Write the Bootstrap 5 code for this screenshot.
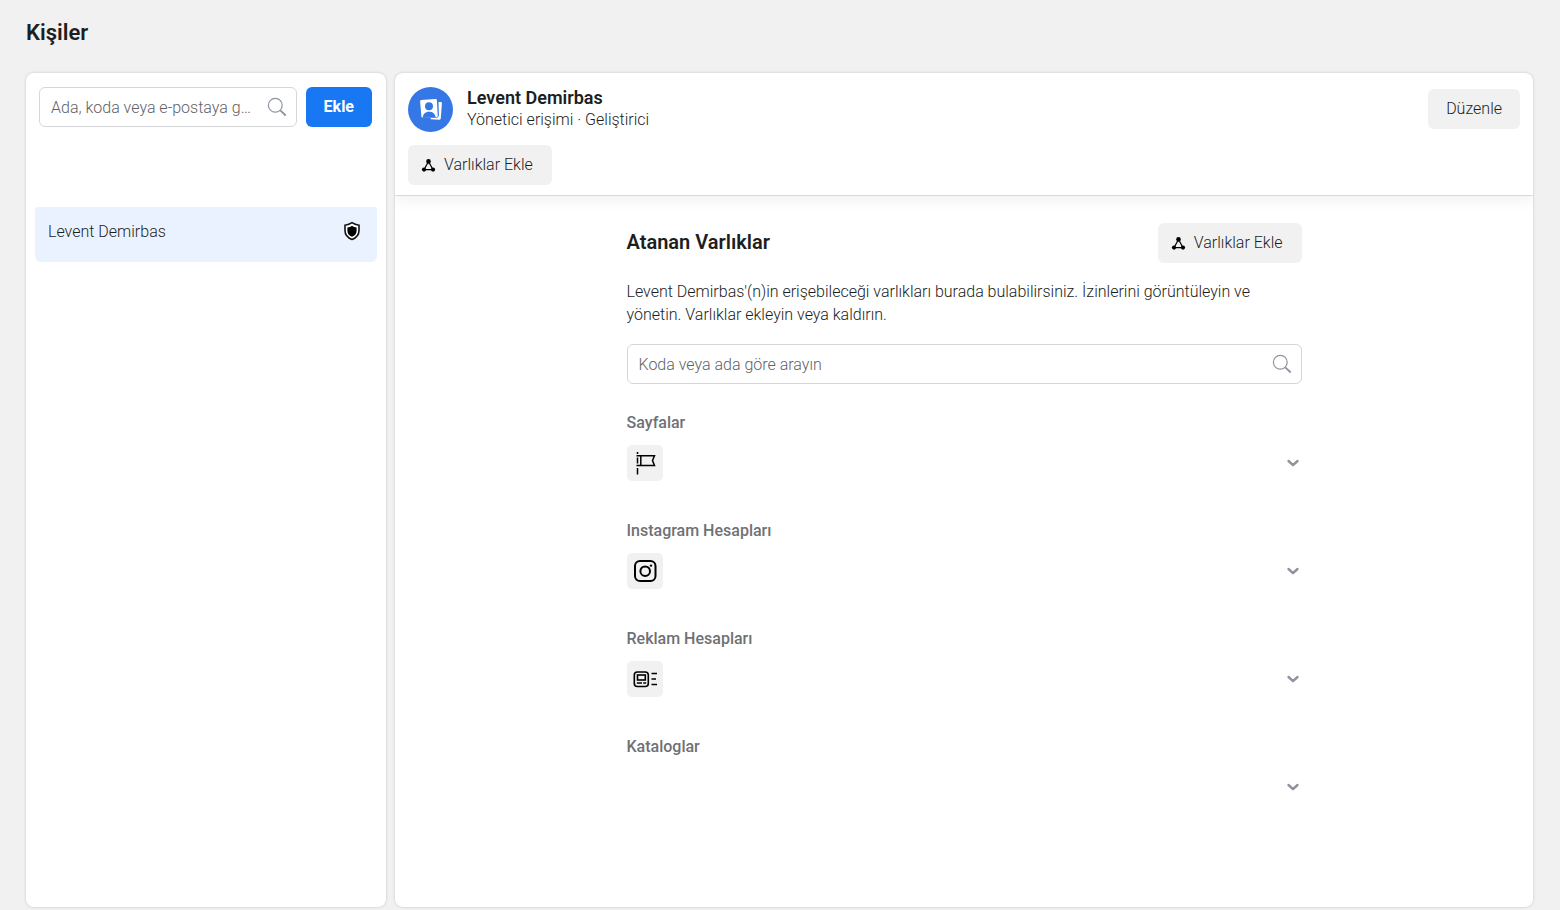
<!DOCTYPE html>
<html lang="tr">
<head>
<meta charset="utf-8">
<meta name="viewport" content="width=device-width, initial-scale=1">
<title>Kişiler</title>
<link href="https://cdn.jsdelivr.net/npm/bootstrap@5.3.0/dist/css/bootstrap.min.css" rel="stylesheet">
<style>
  body { font-family: Roboto, "Liberation Sans", sans-serif; font-size: 16px; line-height: 22px; font-weight: 300; color: #1c1e21; background: #f1f1f1; }
  .page { min-height: 100vh; padding: 17px 27px 3px 26px; }
  .page-title { font-size: 22px; line-height: 32px; font-weight: 600; margin-bottom: 24px; }
  .panels { gap: 9px; }
  .panel { background: #fff; border-radius: 8px; box-shadow: 0 0 3px rgba(0,0,0,.18); }
  .people { flex: 0 0 360px; padding: 14px 9px; }
  .people-tools { gap: 9px; padding: 0 5px 0 4px; margin-bottom: 80px; }
  .search-box .form-control { height: 40px; padding: 0 44px 0 11px; font-size: 16px; font-weight: 300; color: #1c1e21; border-color: #d5d6d8; border-radius: 6px; text-overflow: ellipsis; }
  .search-box .form-control::placeholder { color: #606367; opacity: 1; text-overflow: ellipsis; }
  .search-box svg { position: absolute; right: 10px; top: 10px; }
  .btn { --bs-btn-border-width: 0; --bs-btn-border-radius: 6px; --bs-btn-line-height: 22px; height: 40px; padding: 0 18px; white-space: nowrap; }
  .btn-add { --bs-btn-color: #fff; --bs-btn-bg: #1877f2; --bs-btn-hover-color: #fff; --bs-btn-hover-bg: #166fe5; --bs-btn-font-weight: 700; }
  .btn-soft { --bs-btn-color: #1c1e21; --bs-btn-bg: #f1f1f1; --bs-btn-hover-bg: #e7e7e7; --bs-btn-font-weight: 300; }
  .btn-assets { padding: 0 19px 0 13px; gap: 8px; }
  .person { height: 55px; padding: 14px 16px 0 13px; background: #ebf2ff; border-radius: 3px 3px 6px 6px; color: #1c1e21; }
  .details-head { padding: 14px 13px 10px; border-bottom: 1px solid #d9d9d9; box-shadow: 0 4px 14px rgba(0,0,0,.06); clip-path: inset(0 0 -24px 0); }
  .profile { gap: 14px; margin-bottom: 13px; }
  .profile .btn { margin-top: 2px; }
  .profile h2 { font-size: 18px; line-height: 22px; font-weight: 600; margin: 0; }
  .assets { max-width: 675px; width: 100%; padding-top: 27px; }
  .assets-title { font-size: 20px; line-height: 28px; font-weight: 600; padding-bottom: 2px; }
  .intro { line-height: 23px; margin: 17px 0 18px; padding-right: 30px; }
  .groups { padding-top: 27px; }
  .asset-group { height: 108px; }
  .asset-group h4 { font-size: 16px; line-height: 24px; font-weight: 500; color: #6f7174; margin: 0 0 10px; }
  .asset-row { height: 36px; }
  .tile { width: 36px; height: 36px; border-radius: 5px; background: #f1f1f1; }
  .toggle { border: 0; background: none; padding: 0; width: 18px; height: 18px; }
</style>
</head>
<body>
<svg class="d-none" aria-hidden="true">
  <symbol id="magnifier" viewBox="0 0 20 20"><g fill="none" stroke="#8d949e"><circle cx="8.3" cy="8.3" r="6.9" stroke-width="1.2"/><path d="M13.3 13.3l5.4 5.2" stroke-width="1.8"/></g></symbol>
  <symbol id="nodes" viewBox="0 0 15 15"><path d="M7.5 3.5L3 11.7h9z" fill="none" stroke="#000" stroke-width="1.2"/><circle cx="7.5" cy="3.4" r="2.3"/><circle cx="3" cy="11.6" r="2.1"/><circle cx="12" cy="11.6" r="2.1"/></symbol>
  <symbol id="chevron" viewBox="0 0 18 18"><path d="M4.500 7l4.500 4.200L13.500 7" fill="none" stroke="#8d949e" stroke-width="2.400" stroke-linecap="round" stroke-linejoin="round"/></symbol>
</svg>

<main class="page d-flex flex-column">
  <h1 class="page-title">Kişiler</h1>
  <div class="panels d-flex flex-grow-1">

    <aside class="people panel">
      <div class="people-tools d-flex">
        <div class="search-box position-relative flex-grow-1">
          <input class="form-control" type="text" aria-label="Kişi ara" placeholder="Ada, koda veya e-postaya göre arayın">
          <svg width="20" height="20"><use href="#magnifier"/></svg>
        </div>
        <button class="btn btn-add" type="button">Ekle</button>
      </div>
      <a class="person d-flex align-items-start justify-content-between text-decoration-none" href="#">
        <span>Levent Demirbas</span>
        <svg width="18" height="20" viewBox="0 0 18 20"><path d="M9 1.700c2 1.400 4.300 2.200 7 2.500v5.300c0 4.400-2.600 7.300-7 9-4.400-1.700-7-4.600-7-9V4.200c2.700-.3 5-1.100 7-2.500z" fill="#fff" stroke="#111" stroke-width="1.600"/><path d="M9 4.700c1.400 1 2.800 1.500 4.600 1.800v3.200c0 2.900-1.600 4.900-4.600 6.100-3-1.200-4.600-3.200-4.600-6.100V6.500C6.200 6.200 7.600 5.700 9 4.700z"/></svg>
      </a>
    </aside>

    <section class="panel flex-grow-1">
      <header class="details-head">
        <div class="profile d-flex align-items-start">
          <svg width="45" height="45" viewBox="0 0 45 45">
            <circle cx="22.500" cy="22.500" r="22.500" fill="#3578e5"/>
            <path d="M30.500 15l2.300.1c.8 0 1.200.6 1.100 1.300l-1.100 14.900c-.1 1-.7 1.500-1.600 1.400l-8.500-.5 0-1.300 5.500-.2c1.800-.1 2.700-1.100 2.700-2.700z" fill="#fff"/>
            <path d="M13.200 13l14.300-1c.8 0 1.400.5 1.400 1.300l.8 15.400c0 .8-.4 1.300-1.200 1.300l-13.500.8c-.9 0-1.500-.4-1.600-1.200l-1.300-15.200c0-.8.4-1.300 1.100-1.400z" fill="#fff"/>
            <circle cx="21" cy="19.300" r="4" fill="#3578e5"/>
            <path d="M14.700 31c.2-4 2.400-6.300 6.400-6.300 3.700 0 6.100 2 6.500 5.600z" fill="#3578e5"/>
          </svg>
          <div class="flex-grow-1">
            <h2>Levent Demirbas</h2>
            <div>Yönetici erişimi · Geliştirici</div>
          </div>
          <button class="btn btn-soft" type="button">Düzenle</button>
        </div>
        <button class="btn btn-soft btn-assets d-inline-flex align-items-center" type="button"><svg width="15" height="15"><use href="#nodes"/></svg>Varlıklar Ekle</button>
      </header>

      <div class="assets mx-auto">
        <div class="d-flex align-items-center justify-content-between">
          <h3 class="assets-title mb-0">Atanan Varlıklar</h3>
          <button class="btn btn-soft btn-assets d-inline-flex align-items-center" type="button"><svg width="15" height="15"><use href="#nodes"/></svg>Varlıklar Ekle</button>
        </div>
        <p class="intro">Levent Demirbas'(n)in erişebileceği varlıkları burada bulabilirsiniz. İzinlerini görüntüleyin ve yönetin. Varlıklar ekleyin veya kaldırın.</p>
        <div class="search-box position-relative">
          <input class="form-control" type="text" aria-label="Varlık ara" placeholder="Koda veya ada göre arayın">
          <svg width="20" height="20"><use href="#magnifier"/></svg>
        </div>

        <div class="groups">
          <div class="asset-group">
            <h4>Sayfalar</h4>
            <div class="asset-row d-flex align-items-center justify-content-between">
              <span class="tile"><svg width="36" height="36" viewBox="0 0 36 36" fill="none" stroke="#000" stroke-width="1.500"><path d="M10.500 7v2M10.500 12.500v6M10.500 23v6.500M9.500 10.800h18l-2 4.700 2 5H9.500M13.800 10.800v9.700"/></svg></span>
              <button class="toggle d-flex" type="button" aria-label="Sayfalar"><svg width="18" height="18"><use href="#chevron"/></svg></button>
            </div>
          </div>
          <div class="asset-group">
            <h4>Instagram Hesapları</h4>
            <div class="asset-row d-flex align-items-center justify-content-between">
              <span class="tile"><svg width="36" height="36" viewBox="0 0 36 36" fill="none" stroke="#000" stroke-width="2"><rect x="8" y="8" width="20.500" height="20" rx="5"/><circle cx="18.200" cy="18.200" r="4.800"/><circle cx="24" cy="12.600" r="1.200" fill="#000" stroke="none"/></svg></span>
              <button class="toggle d-flex" type="button" aria-label="Instagram Hesapları"><svg width="18" height="18"><use href="#chevron"/></svg></button>
            </div>
          </div>
          <div class="asset-group">
            <h4>Reklam Hesapları</h4>
            <div class="asset-row d-flex align-items-center justify-content-between">
              <span class="tile"><svg width="36" height="36" viewBox="0 0 36 36" fill="none" stroke="#000" stroke-width="1.600"><rect x="7.300" y="11" width="14" height="14.500" rx="3"/><rect x="10.500" y="14" width="7.800" height="5"/><path d="M9.800 22h5.200M16.200 22h3M24.500 12.500H30M24.500 18H29M24.500 23.500H30"/></svg></span>
              <button class="toggle d-flex" type="button" aria-label="Reklam Hesapları"><svg width="18" height="18"><use href="#chevron"/></svg></button>
            </div>
          </div>
          <div class="asset-group">
            <h4>Kataloglar</h4>
            <div class="asset-row d-flex align-items-center justify-content-end">
              <button class="toggle d-flex" type="button" aria-label="Kataloglar"><svg width="18" height="18"><use href="#chevron"/></svg></button>
            </div>
          </div>
        </div>
      </div>
    </section>
  </div>
</main>
<script src="https://cdn.jsdelivr.net/npm/bootstrap@5.3.0/dist/js/bootstrap.bundle.min.js"></script>
</body>
</html>
